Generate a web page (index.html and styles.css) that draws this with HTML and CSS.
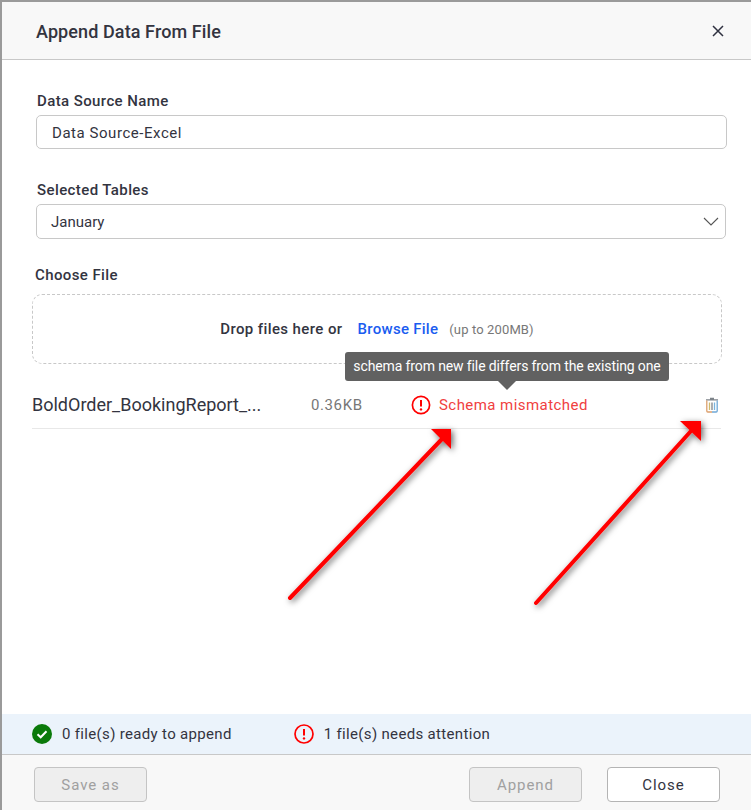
FILE: index.html
```html
<!DOCTYPE html>
<html lang="en">
<head>
    <meta charset="UTF-8">
    <title>Append Data From File</title>
    <link rel="stylesheet" href="styles.css">
</head>
<body>
    <div class="dialog">
        <div class="dialog-header">
            <span class="dialog-title">Append Data From File</span>
            <svg class="close-icon" width="12" height="12" viewBox="0 0 12 12"><path d="M1 1L11 11M11 1L1 11" stroke="#2f3140" stroke-width="1.5" fill="none"/></svg>
        </div>

        <div class="dialog-body">
            <div class="field field-name">
                <label class="field-label">Data Source Name</label>
                <input class="text-input" type="text" value="Data Source-Excel">
            </div>
            <div class="field field-table">
                <label class="field-label">Selected Tables</label>
                <div class="select-box">
                    <span>January</span>
                    <svg width="16" height="9" viewBox="0 0 16 9"><path d="M1 1L8 8L15 1" stroke="#555" stroke-width="1.1" fill="none"/></svg>
                </div>
            </div>
            <div class="field-file">
                <label class="field-label">Choose File</label>
                <div class="dropzone">
                    <span class="drop-text">Drop files here or</span>
                    <a class="browse-link">Browse File</a>
                    <span class="drop-limit">(up to 200MB)</span>
                </div>
            </div>
            <div class="file-row">
                <span class="file-name">BoldOrder_BookingReport_...</span>
                <span class="file-size">0.36KB</span>
                <span class="file-status">
                    <svg width="20" height="20" viewBox="0 0 20 20"><circle cx="10" cy="10" r="8.6" stroke="#f00" stroke-width="1.7" fill="none"/><path d="M10 5V11.5" stroke="#f00" stroke-width="2" fill="none"/><circle cx="10" cy="14.4" r="1.2" fill="#f00"/></svg>
                    Schema mismatched
                </span>
                <svg class="trash-icon" width="14" height="16" viewBox="0 0 14 16">
                    <path d="M5 1.5H9M1 2.8H13" stroke="#7d8389" stroke-width="1.3" fill="none"/>
                    <path d="M1.8 3.5V14a1 1 0 0 0 1 1H7" stroke="#dc9f6c" stroke-width="1.3" fill="none"/>
                    <path d="M12.2 3.5V14a1 1 0 0 1 -1 1H7" stroke="#6fa8d6" stroke-width="1.3" fill="none"/>
                    <path d="M4.5 5.5V13" stroke="#cfbb6e" stroke-width="1.3"/>
                    <path d="M7 5.5V13" stroke="#7d8389" stroke-width="1.3"/>
                    <path d="M9.5 5.5V13" stroke="#78b4de" stroke-width="1.3"/>
                </svg>
            </div>
        </div>

        <div class="status-bar">
            <span class="status-item">
                <svg width="20" height="20" viewBox="0 0 20 20"><circle cx="10" cy="10" r="10" fill="#0a7a0a"/><path d="M5.5 10.3L8.7 13.3L14.5 7.2" stroke="#fff" stroke-width="2" fill="none"/></svg>
                0 file(s) ready to append
            </span>
            <span class="status-item status-item-error">
                <svg width="20" height="20" viewBox="0 0 20 20"><circle cx="10" cy="10" r="9" stroke="#f00" stroke-width="1.7" fill="none"/><path d="M10 5V11.5" stroke="#f00" stroke-width="2" fill="none"/><circle cx="10" cy="14.4" r="1.2" fill="#f00"/></svg>
                1 file(s) needs attention
            </span>
        </div>

        <div class="dialog-footer">
            <button class="btn" disabled>Save as</button>
            <div class="footer-right">
                <button class="btn" disabled>Append</button>
                <button class="btn btn-close">Close</button>
            </div>
        </div>
    </div>

    <div class="tooltip">schema from new file differs from the existing one</div>

    <svg class="arrows" width="751" height="810" viewBox="0 0 751 810">
        <defs>
            <filter id="arrow-shadow" x="-20%" y="-20%" width="150%" height="150%">
                <feDropShadow dx="2" dy="2" stdDeviation="3" flood-color="#000" flood-opacity="0.6"/>
            </filter>
        </defs>
        <g filter="url(#arrow-shadow)">
            <path d="M290 598L442 439" stroke="#f00" stroke-width="4" stroke-linecap="round" fill="none"/>
            <path d="M431 429H451V449Z" fill="#f00"/>
        </g>
        <g filter="url(#arrow-shadow)">
            <path d="M536 603L691 431" stroke="#f00" stroke-width="4" stroke-linecap="round" fill="none"/>
            <path d="M680 421H701V441Z" fill="#f00"/>
        </g>
    </svg>
</body>
</html>
```

FILE: styles.css
```css
* {
    box-sizing: border-box;
}
body {
    margin: 0;
    font-family: Roboto, "Liberation Sans", sans-serif;
    color: #33343f;
    background-color: #fff;
}
.dialog {
    display: flex;
    flex-direction: column;
    width: 751px;
    height: 810px;
    border-top: 2px solid #9a9a9a;
    border-left: 2px solid #9a9a9a;
}
.dialog-header {
    display: flex;
    align-items: center;
    justify-content: space-between;
    height: 58px;
    padding: 2px 27px 0 34px;
    background-color: #f8f8f8;
    border-bottom: 1px solid #c8c8c8;
}
.dialog-title {
    font-size: 18px;
    font-weight: 500;
    letter-spacing: 0.1px;
}
.close-icon {
    margin-top: -1px;
}
.dialog-body {
    flex: 1;
    padding: 32px 0 0 30px;
}
.field-label {
    display: block;
    font-size: 15px;
    font-weight: 500;
    line-height: 18px;
    letter-spacing: 0.4px;
    margin-bottom: 5px;
}
.field {
    padding-left: 4px;
}
.field-name .field-label {
    padding-left: 1px;
}
.field-table {
    margin-top: 32px;
}
.field-table .field-label {
    padding-left: 1px;
}
.text-input {
    display: block;
    width: 691px;
    height: 34px;
    padding: 2px 15px 0;
    border: 1px solid #c8c8c8;
    border-radius: 5px;
    font-family: inherit;
    font-size: 15px;
    letter-spacing: 0.55px;
    color: #33343f;
}
.select-box {
    display: flex;
    align-items: center;
    justify-content: space-between;
    width: 690px;
    height: 35px;
    padding: 0 6px 0 14px;
    border: 1px solid #c8c8c8;
    border-radius: 5px;
    font-size: 15px;
}
.field-file {
    margin-top: 27px;
}
.field-file .field-label {
    padding-left: 3px;
    margin-bottom: 10px;
}
.dropzone {
    display: flex;
    align-items: center;
    justify-content: center;
    width: 690px;
    height: 70px;
    border: 1px dashed #c8c8c8;
    border-radius: 10px;
}
.drop-text {
    font-size: 15px;
    font-weight: 500;
    letter-spacing: 0.4px;
    margin-right: 15px;
}
.browse-link {
    font-size: 15px;
    font-weight: 500;
    letter-spacing: 0.28px;
    color: #1a5cf0;
    margin-right: 11px;
}
.drop-limit {
    font-size: 13px;
    letter-spacing: 0.13px;
    color: #777;
}
.file-row {
    display: flex;
    align-items: center;
    width: 689px;
    height: 65px;
    padding-top: 18px;
    border-bottom: 1px solid #e8e8e8;
}
.file-name {
    width: 279px;
    margin-bottom: 2px;
    font-size: 18px;
}
.file-size {
    width: 100px;
    font-size: 15px;
    letter-spacing: 0.6px;
    color: #777;
}
.file-status {
    display: flex;
    align-items: center;
    gap: 8px;
    width: 294px;
    font-size: 15px;
    letter-spacing: 0.44px;
    color: #f04040;
}
.status-bar {
    display: flex;
    align-items: center;
    height: 41px;
    padding-left: 30px;
    background-color: #ebf3fb;
    border-bottom: 1px solid #c8c8c8;
}
.status-item {
    display: flex;
    align-items: center;
    gap: 10px;
    font-size: 15px;
    letter-spacing: 0.33px;
}
.status-item-error {
    margin-left: 62px;
}
.dialog-footer {
    display: flex;
    align-items: flex-start;
    justify-content: space-between;
    flex: none;
    height: 55px;
    padding: 12px 31px 0 32px;
    background-color: #f8f8f8;
}
.footer-right {
    display: flex;
    gap: 25px;
}
.btn {
    width: 113px;
    height: 35px;
    background-color: #eeeeee;
    border: 1px solid #c4c4c4;
    border-radius: 4px;
    font-family: inherit;
    font-size: 15px;
    letter-spacing: 0.95px;
    color: #a0a0a0;
}
.btn-close {
    background-color: #fff;
    border-color: #b4b4b4;
    color: #33343f;
}
.tooltip {
    position: absolute;
    left: 345px;
    top: 352px;
    width: 324px;
    height: 29px;
    line-height: 29px;
    text-align: center;
    font-size: 14px;
    letter-spacing: -0.12px;
    color: #fff;
    background-color: #616161;
    border-radius: 3px;
}
.tooltip::after {
    content: "";
    position: absolute;
    left: 153px;
    top: 29px;
    border-left: 9px solid transparent;
    border-right: 9px solid transparent;
    border-top: 9px solid #616161;
}
.arrows {
    position: absolute;
    left: 0;
    top: 0;
    pointer-events: none;
}
```
